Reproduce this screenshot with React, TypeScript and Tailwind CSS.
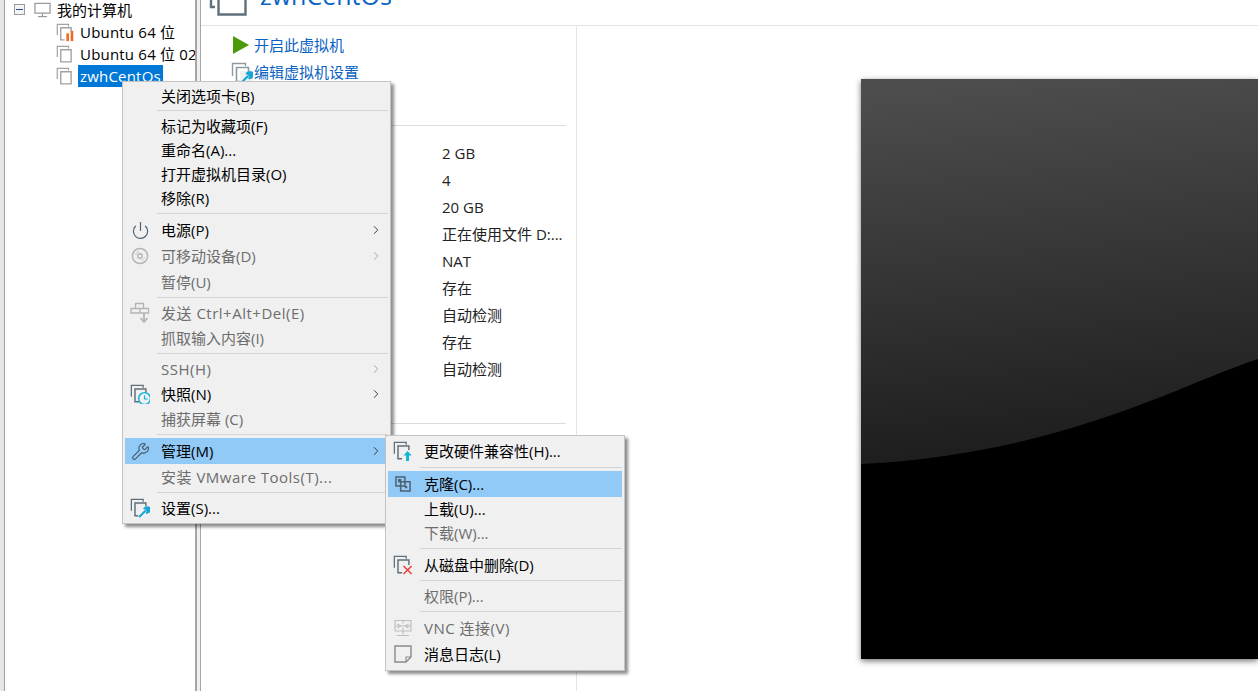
import React from 'react';
import { Power, Wrench, ChevronRight } from 'lucide-react';

const FONT = "font-['Open_Sans','Noto_Sans_CJK_SC',sans-serif]";

type Badge = 'none' | 'bars' | 'wrench' | 'clock' | 'up' | 'x';

// stacked VM squares, the badge sits on the lower right corner
function VmIcon({ color = '#5f6f7b', badge = 'none', className = 'h-[20px] w-[20px]' }: { color?: string; badge?: Badge; className?: string }) {
  return (
    <svg viewBox="0 0 22 22" fill="none" className={className}>
      <path d="M1.5 14V1.5H14.5V4" stroke={color} strokeWidth="1.4" />
      <path d="M5.5 5.5H17.5V19.5H5.5Z" stroke={color} strokeWidth="1.6" fill="none" />
      {badge === 'bars' && (
        <>
          <rect x="10" y="10" width="12" height="12" fill="#fff" />
          <rect x="12" y="12" width="3" height="9" fill="#f26a21" />
          <rect x="17" y="9" width="3" height="12" fill="#f26a21" />
        </>
      )}
      {badge === 'wrench' && (
        <>
          <rect x="9" y="9" width="13" height="13" fill="#f0f0f0" />
          <path d="M10 21L17 14M15.5 12.5C16 10.5 18.5 9.5 20.5 10.5L18 13L19.5 14.5L21.5 12.5C22 15 19.5 16.5 17.5 16" stroke="#12a5d6" strokeWidth="2.2" />
        </>
      )}
      {badge === 'clock' && (
        <>
          <circle cx="16" cy="16" r="6.5" fill="#f0f0f0" stroke="#12b5e0" strokeWidth="1.6" />
          <path d="M16 12.5V16.5H19.5" stroke="#12b5e0" strokeWidth="1.3" />
        </>
      )}
      {badge === 'up' && (
        <>
          <rect x="10" y="10" width="12" height="12" fill="#f0f0f0" />
          <path d="M16 11L20.5 16H17.6V22H14.4V16H11.5Z" fill="#12b5d6" />
        </>
      )}
      {badge === 'x' && (
        <>
          <rect x="10" y="11" width="12" height="11" fill="#f0f0f0" />
          <path d="M11.5 12L20.5 21M20.5 12L11.5 21" stroke="#ee3b3b" strokeWidth="1.6" />
        </>
      )}
    </svg>
  );
}

function DiscIcon() {
  return (
    <svg width="18" height="18" viewBox="0 0 18 18" fill="none">
      <circle cx="9" cy="9" r="7.6" stroke="#b5b5b5" strokeWidth="1.5" />
      <circle cx="9" cy="9" r="2.2" stroke="#b5b5b5" strokeWidth="1.4" />
      <path d="M4.5 8C5 6 6 5 8 4.5M10.5 13.5C12 13 13 12 13.5 10.5" stroke="#c5c5c5" />
    </svg>
  );
}

function SendKeysIcon() {
  return (
    <svg width="20" height="22" viewBox="0 0 20 22" fill="none" stroke="#b4b4b4" strokeWidth="1.3">
      <path d="M5.5 1.5H13.5V6.5H5.5ZM1 6.5H10V11H1ZM10 6.5H18.5V11H10Z" />
      <path d="M14 11V19" strokeWidth="1.8" />
      <path d="M10.5 16L14 20L17.5 16" strokeWidth="1.8" />
    </svg>
  );
}

function CloneIcon() {
  return (
    <svg width="16" height="16" viewBox="0 0 17 17" fill="none" stroke="#4f6272" strokeWidth="1.6">
      <path d="M1 1H10.5V10.5H1Z" />
      <path d="M6 6H16V16H6Z" />
      <rect x="3.2" y="3.2" width="3.5" height="3.5" fill="#4f6272" stroke="none" />
      <rect x="10.5" y="10.5" width="2.5" height="2.5" fill="#4f6272" stroke="none" />
    </svg>
  );
}

function VncIcon() {
  return (
    <svg width="18" height="18" viewBox="0 0 18 18" fill="none" stroke="#bdbdbd" strokeWidth="1.1">
      <path d="M1 1.5H17V12H1ZM1 7H17M9 1.5V4.5M9 9V12M9 12V15.5M3 16.5H15" />
      <path d="M3.5 5L6.5 7L3.5 9M14.5 5L11.5 7L14.5 9" />
    </svg>
  );
}

function NoteIcon() {
  return (
    <svg width="18" height="18" viewBox="0 0 18 18" fill="none" stroke="#8a8a8a" strokeWidth="1.4">
      <path d="M1 1H17V12L12 17H1Z" />
      <path d="M12 17V12H17" strokeWidth="1.1" />
    </svg>
  );
}

function Sep({ h }: { h: string }) {
  return (
    <div className={`flex items-center ${h}`}>
      <div className="ml-[32px] h-px flex-1 bg-[#d3d3d3]" />
    </div>
  );
}

function Row({
  label,
  h,
  icon,
  disabled,
  active,
  arrow,
  wide,
}: {
  label: string;
  h: string;
  icon?: React.ReactNode;
  disabled?: boolean;
  active?: boolean;
  arrow?: boolean;
  wide?: boolean;
}) {
  return (
    <div className={`relative flex items-center pl-[36px] ${h} ${active ? 'bg-[#91c9f7]' : ''} ${disabled ? 'text-[#6d6d6d]' : 'text-black'}`}>
      {icon && <span className="absolute left-[3px] top-1/2 flex h-[22px] w-[24px] -translate-y-1/2 items-center justify-center">{icon}</span>}
      <span className={`flex-1 whitespace-nowrap ${wide ? 'tracking-[0.5px]' : ''}`}>{label}</span>
      {arrow && <ChevronRight size={14} strokeWidth={1.6} className={`mr-[5px] ${disabled ? 'text-[#a0a0a0]' : 'text-[#303030]'}`} />}
    </div>
  );
}

function MainMenu() {
  return (
    <div className="absolute left-[122px] top-[81px] z-10 h-[443px] w-[269px] border border-[#c4c4c4] bg-[#f0f0f0] p-[2px] text-[15px] leading-[20px] shadow-[3px_3px_3px_rgba(0,0,0,0.45)]">
      <Row h="h-[23px]" label="关闭选项卡(B)" />
      <Sep h="h-[7px]" />
      <Row h="h-[24px]" label="标记为收藏项(F)" />
      <Row h="h-[24px]" label="重命名(A)..." />
      <Row h="h-[24px]" label="打开虚拟机目录(O)" />
      <Row h="h-[24px]" label="移除(R)" />
      <Sep h="h-[7px]" />
      <Row h="h-[26px]" arrow label="电源(P)" icon={<Power size={19} strokeWidth={1.5} color="#4f6272" />} />
      <Row h="h-[26px]" arrow disabled label="可移动设备(D)" icon={<DiscIcon />} />
      <Row h="h-[25px]" disabled label="暂停(U)" />
      <Sep h="h-[6px]" />
      <Row h="h-[25px]" disabled wide label="发送 Ctrl+Alt+Del(E)" icon={<SendKeysIcon />} />
      <Row h="h-[25px]" disabled label="抓取输入内容(I)" />
      <Sep h="h-[6px]" />
      <Row h="h-[26px]" arrow disabled wide label="SSH(H)" />
      <Row h="h-[24px]" arrow label="快照(N)" icon={<VmIcon badge="clock" />} />
      <Row h="h-[25px]" disabled label="捕获屏幕 (C)" />
      <Sep h="h-[7px]" />
      <Row h="h-[26px]" active arrow label="管理(M)" icon={<Wrench size={19} strokeWidth={1.4} color="#44586a" />} />
      <Row h="h-[25px]" disabled wide label="安装 VMware Tools(T)..." />
      <Sep h="h-[6px]" />
      <Row h="h-[26px]" label="设置(S)..." icon={<VmIcon badge="wrench" />} />
    </div>
  );
}

function SubMenu() {
  return (
    <div className="absolute left-[385px] top-[435px] z-20 h-[236px] w-[240px] border border-[#c4c4c4] bg-[#f0f0f0] p-[2px] text-[15px] leading-[20px] shadow-[3px_3px_3px_rgba(0,0,0,0.45)]">
      <Row h="h-[26px]" label="更改硬件兼容性(H)..." icon={<VmIcon badge="up" />} />
      <Sep h="h-[7px]" />
      <Row h="h-[26px]" active label="克隆(C)..." icon={<CloneIcon />} />
      <Row h="h-[24px]" label="上载(U)..." />
      <Row h="h-[24px]" disabled label="下载(W)..." />
      <Sep h="h-[6px]" />
      <Row h="h-[27px]" label="从磁盘中删除(D)" icon={<VmIcon badge="x" />} />
      <Sep h="h-[5px]" />
      <Row h="h-[25px]" disabled label="权限(P)..." />
      <Sep h="h-[6px]" />
      <Row h="h-[27px]" disabled wide label="VNC 连接(V)" icon={<VncIcon />} />
      <Row h="h-[25px]" label="消息日志(L)" icon={<NoteIcon />} />
    </div>
  );
}

function Sidebar() {
  const vms: { name: string; running?: boolean; selected?: boolean }[] = [
    { name: 'Ubuntu 64 位', running: true },
    { name: 'Ubuntu 64 位 02' },
    { name: 'zwhCentOs', selected: true },
  ];
  return (
    <div className="flex h-full w-[197px] shrink-0 border-r-2 border-[#a6a6a6]">
      <div className="w-[5px] shrink-0 border-r border-[#a0a0a0] bg-[#e6e6e6]" />
      <div className="min-w-0 flex-1 overflow-hidden text-[15px] leading-[20px] text-black">
        <div className="flex h-[21px] items-center pb-[2px] pl-[9px]">
          <span className="flex h-[11px] w-[11px] items-center justify-center border border-[#9a9a9a] bg-[#f4f4f4]">
            <span className="h-px w-[7px] bg-[#33449a]" />
          </span>
          <svg width="19" height="16" viewBox="0 0 20 18" fill="none" stroke="#9a9a9a" strokeWidth="1.4" className="ml-[8px]">
            <path d="M1.5 1.5H18.5V12.5H1.5ZM10 12.5V16M5 16.5H15" />
          </svg>
          <span className="ml-[5px]">我的计算机</span>
        </div>
        {vms.map((vm) => (
          <div key={vm.name} className="flex h-[22px] items-center pl-[51px]">
            <VmIcon color="#a2a2a2" badge={vm.running ? 'bars' : 'none'} className="h-[19px] w-[19px] shrink-0" />
            <span className={`ml-[3px] whitespace-nowrap px-[2px] leading-[22px] tracking-[0.2px] ${vm.selected ? 'bg-[#0078d7] text-white' : ''}`}>{vm.name}</span>
          </div>
        ))}
      </div>
    </div>
  );
}

function Details() {
  const rows = ['2 GB', '4', '20 GB', '正在使用文件 D:...', 'NAT', '存在', '自动检测', '存在', '自动检测'];
  return (
    <div className="flex h-full w-[376px] shrink-0 flex-col border-r border-[#e4e4e4] text-[15px]">
      <div className="flex h-[38px] items-center pl-[32px] text-[#0a62c2]">
        <svg width="16" height="18" viewBox="0 0 16 18" className="shrink-0">
          <path d="M0 0L16 9L0 18Z" fill="#4c9a0a" />
        </svg>
        <span className="ml-[5px] leading-[20px]">开启此虚拟机</span>
      </div>
      <div className="flex h-[15px] items-start pl-[30px] text-[#0a62c2]">
        <VmIcon color="#8e9aa3" badge="wrench" className="-mt-[2px] h-[22px] w-[22px] shrink-0" />
        <span className="-mt-[2px] ml-[1px] leading-[20px]">编辑虚拟机设置</span>
      </div>
      <div className="ml-[14px] mr-[10px] mt-[46px] h-px bg-[#dcdcdc]" />
      <div className="flex flex-col pl-[241px] pt-[14px] leading-[27px] text-[#222]">
        {rows.map((value, i) => (
          <div key={i} className="h-[27px] whitespace-nowrap">
            {value}
          </div>
        ))}
      </div>
      <div className="ml-[14px] mr-[10px] mt-[40px] h-px bg-[#dcdcdc]" />
    </div>
  );
}

function Preview() {
  return (
    <div className="min-w-0 flex-1 overflow-hidden pl-[284px] pt-[53px]">
      <div className="h-[580px] w-[397px] bg-black shadow-[0_2px_6px_rgba(0,0,0,0.55)]">
        <svg width="397" height="580" viewBox="0 0 397 580" className="block">
          <defs>
            <linearGradient id="gloss" x1="0.35" y1="0" x2="0.45" y2="1">
              <stop offset="0" stopColor="#4d4d4d" />
              <stop offset="1" stopColor="#1c1c1c" />
            </linearGradient>
          </defs>
          <path d="M0 0H397V280C320 305 200 375 0 385Z" fill="url(#gloss)" />
        </svg>
      </div>
    </div>
  );
}

export default function App() {
  return (
    <div className={`relative flex h-[691px] w-[1258px] overflow-hidden bg-white ${FONT}`}>
      <Sidebar />
      <div className="w-[4px] shrink-0 border-r border-[#a6a6a6] bg-[#f0f0f0]" />
      <div className="flex min-w-0 flex-1 flex-col">
        <div className="flex h-[26px] shrink-0 items-end overflow-hidden border-b border-[#e2e2e2] pl-[8px]">
          <svg width="40" height="16" viewBox="0 0 40 16" fill="none" stroke="#5f6f7b" strokeWidth="2.4" className="mb-[9px] shrink-0">
            <path d="M2 0V7H6" />
            <path d="M9.5 0V14.5H36.5V0" />
          </svg>
          <span className="mb-[15px] ml-[11px] whitespace-nowrap text-[25px] leading-[30px] text-[#0a62c2]">zwhCentOs</span>
        </div>
        <div className="flex min-h-0 flex-1">
          <Details />
          <Preview />
        </div>
      </div>
      <MainMenu />
      <SubMenu />
    </div>
  );
}
